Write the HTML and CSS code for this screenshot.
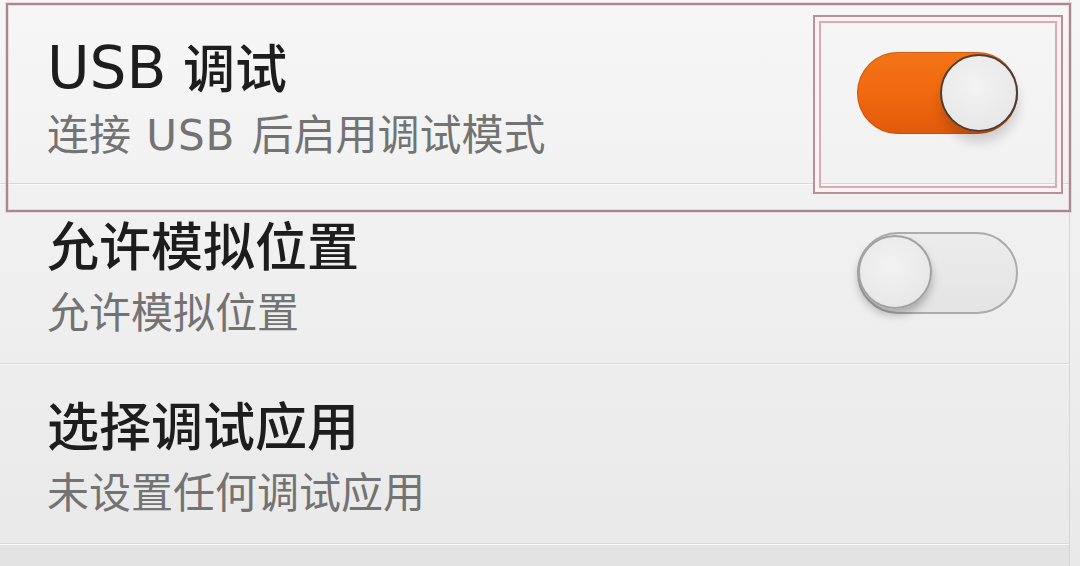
FILE: index.html
```html
<!DOCTYPE html>
<html lang="zh-CN">
<head>
<meta charset="utf-8">
<title>开发者选项</title>
<link rel="stylesheet" href="styles.css">
</head>
<body>
<div class="screen">
  <div class="list">
    <div class="row">
      <div class="text">
        <div class="title"><span class="latin">USB</span> 调试</div>
        <div class="sub">连接 <span class="latin">USB</span> 后启用调试模式</div>
      </div>
      <div class="switch on">
        <span class="knob"></span>
        <span class="mark-inner"></span>
      </div>
      <span class="mark-outer"></span>
    </div>
    <div class="row">
      <div class="text">
        <div class="title">允许模拟位置</div>
        <div class="sub">允许模拟位置</div>
      </div>
      <div class="switch off">
        <span class="knob"></span>
      </div>
    </div>
    <div class="row">
      <div class="text">
        <div class="title">选择调试应用</div>
        <div class="sub">未设置任何调试应用</div>
      </div>
    </div>
  </div>
  <div class="footer"></div>
</div>
</body>
</html>
```
FILE: styles.css
```css
html, body {
  margin: 0;
  padding: 0;
}
body {
  width: 1080px;
  height: 566px;
  overflow: hidden;
  background: linear-gradient(#f7f6f6, #eeeeee 60%, #e9e9e9);
  font-family: "DejaVu Sans", "Noto Sans CJK SC", sans-serif;
}
.screen {
  width: 1070px;
  height: 566px;
  border-right: 1px solid #d6d6d6;
  box-sizing: border-box;
}
.list {
  padding-top: 4px;
}
.row {
  position: relative;
  height: 180px;
  box-sizing: border-box;
  display: flex;
  align-items: center;
  padding: 0 51px 0 47px;
  border-bottom: 1px solid #d8d8d8;
  box-shadow: 0 1px 0 #fafafa;
}
.text {
  flex: 1;
  align-self: flex-start;
  padding-top: 34px;
}
.title {
  font-size: 52px;
  line-height: 60px;
  color: #1d1d1d;
  font-weight: 500;
}
.title .latin {
  font-size: 1.12em;
  letter-spacing: 0;
}
.sub {
  font-size: 42px;
  line-height: 50px;
  margin-top: 11px;
  color: #737373;
}
.sub .latin {
  letter-spacing: 0.02em;
  margin: 0 3px 0 2px;
}
.switch {
  position: relative;
  width: 161px;
  height: 82px;
  border-radius: 41px;
  margin-bottom: 2px;
  box-sizing: border-box;
  flex: none;
}
.switch.on {
  background: linear-gradient(#f47418, #f26a10 45%, #e25a0a);
  box-shadow: inset 0 0 0 1px rgba(170, 70, 10, 0.45);
}
.switch.off {
  background: linear-gradient(#ececec, #e4e4e4);
  border: 2px solid #acacac;
}
.knob {
  position: absolute;
  border-radius: 50%;
  box-sizing: border-box;
  background: radial-gradient(circle at 45% 40%, #f3f3f3, #e8e8e8 70%, #dddddd);
}
.switch.on .knob {
  width: 78px;
  height: 78px;
  top: 2px;
  right: 0;
  border: 2px solid #4e3d34;
  box-shadow: 0 10px 12px rgba(0, 0, 0, 0.16);
}
.switch.off .knob {
  width: 74px;
  height: 74px;
  top: 1px;
  left: -1px;
  border: 2px solid #a2a2a2;
  box-shadow: 0 6px 9px rgba(0, 0, 0, 0.25);
}
.mark-inner {
  position: absolute;
  left: -44px;
  right: -45px;
  top: -37px;
  bottom: -60px;
  border: 2px solid #b8929a;
  box-shadow: inset 0 0 0 4px #fcf1f3, inset 0 0 0 6px #dcaab2;
  pointer-events: none;
}
.mark-outer {
  position: absolute;
  left: 6px;
  right: -2px;
  top: -1px;
  bottom: -29px;
  border: 2px solid #a38b92;
  box-shadow: 0 0 0 1px rgba(235, 185, 195, 0.5), inset 0 0 0 1px rgba(235, 185, 195, 0.5);
  pointer-events: none;
}
.footer {
  height: 22px;
  background: #e3e3e3;
}
```
